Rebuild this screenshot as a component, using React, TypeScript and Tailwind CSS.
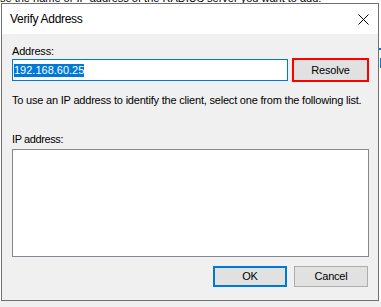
import React from "react";

export default function App() {
  return (
    <div className="relative w-[381px] h-[307px] overflow-hidden bg-white text-black font-['Liberation_Sans',Arial,sans-serif]">
      {/* background window */}
      <div className="flex flex-col h-full">
        <div className="h-[301px] bg-white flex flex-col">
          <p className="-mt-[8px] text-[11px] leading-[13px] whitespace-nowrap">
            se the name or IP address of the RADIUS server you want to add.
          </p>
          <div className="flex justify-end mt-[43px]">
            <div className="w-[2px] h-[2px] bg-[#0078d7]" />
          </div>
          <div className="flex justify-end mt-[8px]">
            <div className="w-[1px] h-[10px] bg-[#0078d7]" />
          </div>
        </div>
        <div className="flex-1 bg-[#f0f0f0]" />
      </div>

      {/* dialog window */}
      <div className="absolute left-[1px] top-[3px] w-[378px] h-[298px] border border-[#707070] bg-[#f0f0f0] flex flex-col">
        <div className="h-[30px] bg-white flex items-center justify-between pl-[8px] pr-[9px]">
          <span className="text-[12px] leading-[14px] tracking-[-0.3px]">Verify Address</span>
          <svg width="11" height="11" viewBox="0 0 11 11" className="mt-[1px]">
            <path d="M0.5 0.5 L10.5 10.5 M10.5 0.5 L0.5 10.5" stroke="#000" strokeWidth="1" fill="none" />
          </svg>
        </div>

        <div className="flex-1 flex flex-col pl-[10px] pr-[9px] text-[11px] leading-[13px] tracking-[-0.2px]">
          <div className="mt-[11px] h-[13px]">Address:</div>

          <div className="h-[24px] flex items-center gap-[4px]">
            <div className="w-[276px] h-[22px] border border-[#0078d7] bg-white flex items-center pl-[1px]">
              <span className="bg-[#0078d7] text-white h-[13px] leading-[13px] tracking-normal px-0">192.168.60.25</span>
            </div>
            <div className="w-[77px] h-[24px] border-2 border-[#ff0000] bg-[#e1e1e1] flex items-center justify-center">
              <span>Resolve</span>
            </div>
          </div>

          <div className="mt-[12px] whitespace-nowrap">
            To use an IP address to identify the client, select one from the following list.
          </div>

          <div className="mt-[26px] h-[13px] tracking-[-0.4px]">IP address:</div>

          <div className="mt-[3px] h-[108px] border border-[#828790] bg-white" />

          <div className="mt-[9px] flex justify-end gap-[7px] pr-[1px]">
            <div className="w-[74px] h-[21px] border-2 border-[#0078d7] bg-[#e1e1e1] flex items-center justify-center">
              OK
            </div>
            <div className="w-[74px] h-[21px] border border-[#adadad] bg-[#e1e1e1] flex items-center justify-center">
              Cancel
            </div>
          </div>
        </div>
      </div>
    </div>
  );
}
